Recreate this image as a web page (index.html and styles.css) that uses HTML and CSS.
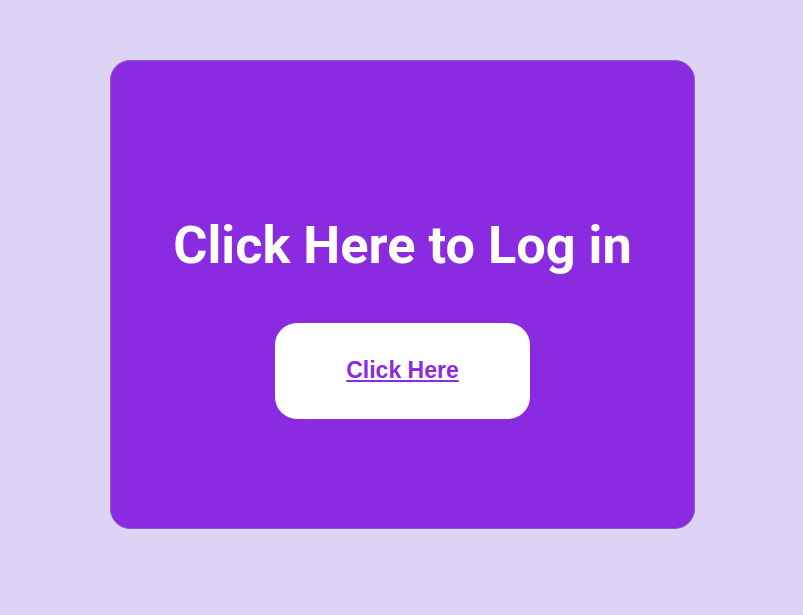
FILE: index.html
```html
<!DOCTYPE html>
<html>
<head>
<meta charset="utf-8">
<link rel="stylesheet" href="styles.css">
</head>
<body>
<div class="card">
  <h1 class="title">Click Here to Log in</h1>
  <a class="btn" href="#">Click Here</a>
</div>
</body>
</html>
```
FILE: styles.css
```css
html, body {
  margin: 0;
  padding: 0;
}
body {
  background: #dcd3f5;
  padding-top: 60px;
  height: 615px;
  box-sizing: border-box;
}
.card {
  width: 585px;
  height: 469px;
  margin: 0 auto 0 110px;
  box-sizing: border-box;
  padding-top: 44px;
  background: #8a2be2;
  border: 1px solid #8e5bbf;
  border-radius: 20px;
  display: flex;
  flex-direction: column;
  align-items: center;
  justify-content: center;
}
.title {
  margin: 0 0 48px;
  font-family: Roboto, sans-serif;
  font-weight: 700;
  font-size: 52.3px;
  line-height: 60px;
  color: #fff;
}
.btn {
  display: flex;
  align-items: center;
  justify-content: center;
  width: 255px;
  height: 96px;
  background: #fff;
  border-radius: 22px;
  color: #8a2be2;
  font-family: "Liberation Sans", Arimo, Arial, Helvetica, sans-serif;
  font-weight: bold;
  font-size: 23px;
  text-decoration: underline;
}
```
